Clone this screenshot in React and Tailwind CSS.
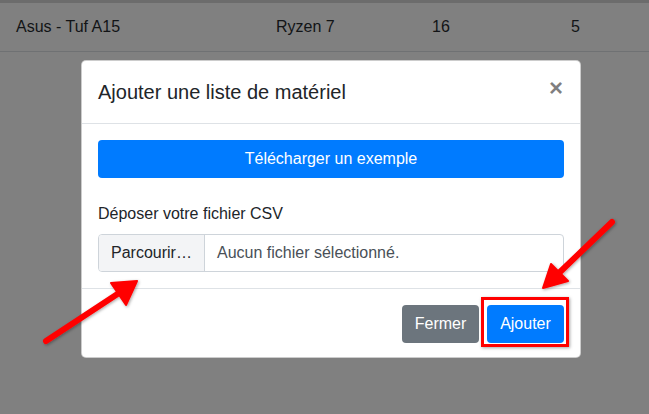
import React from 'react';

const Arrows = () => (
    <svg className="absolute inset-0 pointer-events-none" width="649" height="414" viewBox="0 0 649 414">
        <defs>
            <filter id="sh" x="-20%" y="-20%" width="140%" height="140%">
                <feDropShadow dx="1" dy="1" stdDeviation="1.5" floodColor="#000" floodOpacity="0.35" />
            </filter>
        </defs>
        <g filter="url(#sh)" fill="#ff0000" stroke="#ff0000">
            {/* left arrow */}
            <line x1="46" y1="341" x2="119" y2="293" strokeWidth="6" strokeLinecap="round" />
            <polygon points="137,281 111,283 126,305" strokeWidth="2" strokeLinejoin="round" />
            {/* right arrow */}
            <line x1="612" y1="222" x2="560" y2="272" strokeWidth="6" strokeLinecap="round" />
            <polygon points="543,288 551,264 568,281" strokeWidth="2" strokeLinejoin="round" />
        </g>
    </svg>
);

const App = () => {
    return (
        <div className="relative w-[649px] h-[414px] overflow-hidden bg-[#808080] font-['Liberation_Sans',Arial,sans-serif] text-[16px]">

            {/* Table behind the backdrop */}
            <div className="border-t-[3px] border-[#6c6c6c]">
                <div className="grid grid-cols-[260px_156px_139px_1fr] pl-4 py-3 leading-6 text-[#121416] border-b border-[#6f7173]">
                    <span>Asus - Tuf A15</span>
                    <span>Ryzen 7</span>
                    <span>16</span>
                    <span>5</span>
                </div>
            </div>

            {/* Modal */}
            <div className="absolute left-[81px] top-[60px] w-[500px] bg-white rounded-[5px] border border-black/20 text-[#212529]">
                <div className="flex items-center justify-between p-4 border-b border-[#dee2e6]">
                    <h5 className="text-[20px] leading-[30px]">Ajouter une liste de matériel</h5>
                    <span className="text-[24px] font-bold leading-none text-black/50 -mt-2 mr-[1px]">×</span>
                </div>

                <div className="p-4">
                    <button className="w-full h-[38px] rounded-[4px] bg-[#007bff] text-white leading-6">
                        Télécharger un exemple
                    </button>
                    <label className="block mt-6 mb-2 leading-6">Déposer votre fichier CSV</label>
                    <div className="flex h-[38px] border border-[#ced4da] rounded-[4px] overflow-hidden">
                        <div className="w-[106px] shrink-0 flex items-center px-3 bg-[#f3f4f6] border-r border-[#ced4da] text-[#212529] whitespace-nowrap">
                            Parcourir…
                        </div>
                        <div className="flex items-center px-3 text-[#495057]">Aucun fichier sélectionné.</div>
                    </div>
                </div>

                <div className="flex justify-end gap-2 px-4 pt-4 pb-[14px] border-t border-[#dee2e6]">
                    <button className="w-[77px] h-[38px] rounded-[4px] bg-[#6c757d] text-white">Fermer</button>
                    <div className="relative">
                        <button className="w-[77px] h-[38px] rounded-[4px] bg-[#007bff] text-white">Ajouter</button>
                        <div className="absolute -left-[6px] -right-[5px] -top-[8px] -bottom-[4px] border-[3px] border-[#ff0000] shadow-[1px_1px_3px_rgba(0,0,0,0.35)]"></div>
                    </div>
                </div>
            </div>

            <Arrows />
        </div>
    );
};

export default App;
